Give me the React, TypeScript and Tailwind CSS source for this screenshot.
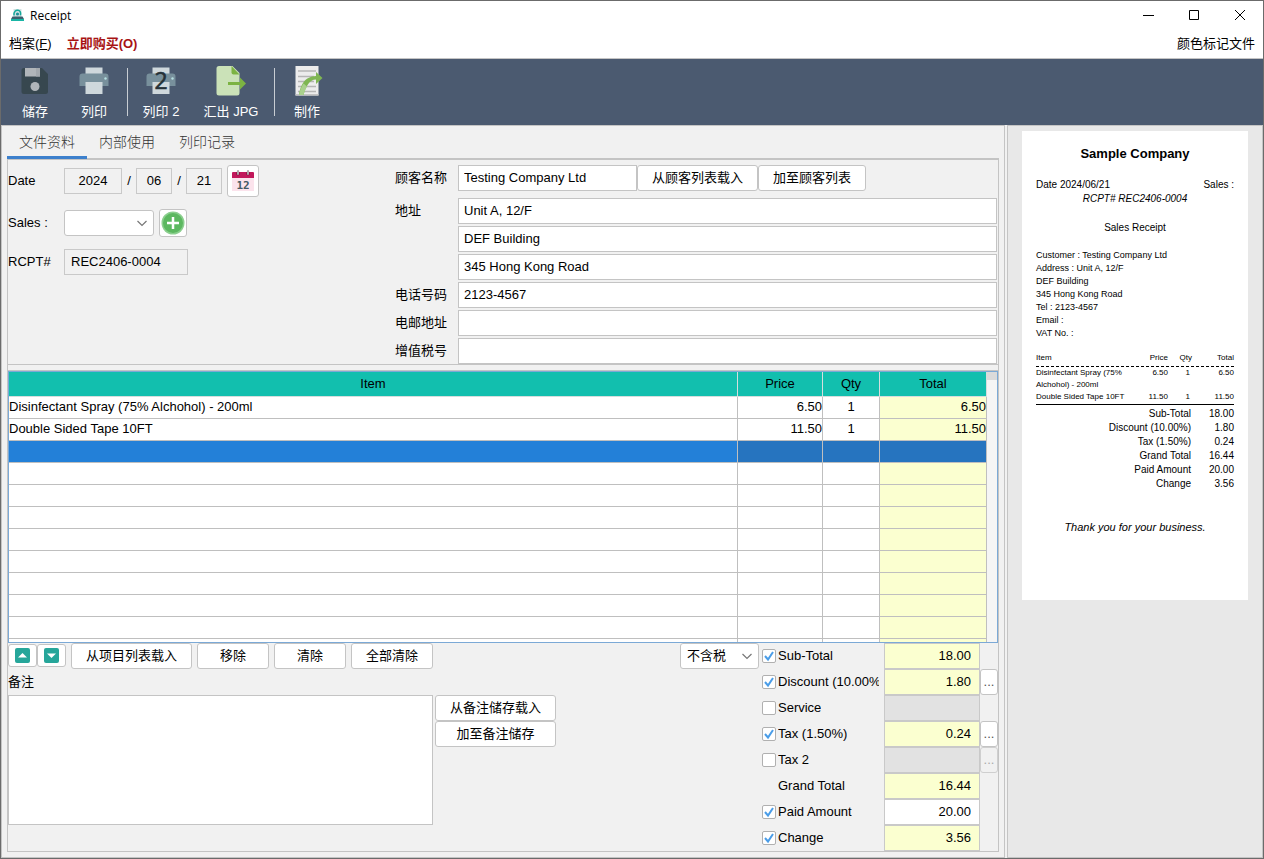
import React, { useState } from 'react';
import clsx from 'clsx';

interface LineItem {
  name: string;
  price: string;
  qty: string;
  total: string;
}

interface TotalRow {
  id: string;
  label: string;
  value: string;
  checked?: boolean;
  field: 'yellow' | 'gray' | 'white';
  more?: 'on' | 'off';
}

const items: LineItem[] = [
  { name: 'Disinfectant Spray (75% Alchohol) - 200ml', price: '6.50', qty: '1', total: '6.50' },
  { name: 'Double Sided Tape 10FT', price: '11.50', qty: '1', total: '11.50' },
];

const ROW_COUNT = 11;
const SELECTED_ROW = 2;

const totals: TotalRow[] = [
  { id: 'subtotal', label: 'Sub-Total', value: '18.00', checked: true, field: 'yellow' },
  { id: 'discount', label: 'Discount (10.00%)', value: '1.80', checked: true, field: 'yellow', more: 'on' },
  { id: 'service', label: 'Service', value: '', checked: false, field: 'gray' },
  { id: 'tax', label: 'Tax (1.50%)', value: '0.24', checked: true, field: 'yellow', more: 'on' },
  { id: 'tax2', label: 'Tax 2', value: '', checked: false, field: 'gray', more: 'off' },
  { id: 'grand', label: 'Grand Total', value: '16.44', field: 'yellow' },
  { id: 'paid', label: 'Paid Amount', value: '20.00', checked: true, field: 'white' },
  { id: 'change', label: 'Change', value: '3.56', checked: true, field: 'yellow' },
];

const customerLines = [
  'Customer : Testing Company Ltd',
  'Address : Unit A, 12/F',
  'DEF Building',
  '345 Hong Kong Road',
  'Tel : 2123-4567',
  'Email :',
  'VAT No. :',
];

/* ---------- icons ---------- */

const AppIcon = () => (
  <svg width="13" height="13" viewBox="0 0 13 13">
    <path d="M2.500 0h8v8h-8z" fill="#d5e4e4" />
    <path d="M3 6.500C2.500 2.500 5 1 7 1.300c2.300.3 3 2.200 2.500 5" fill="none" stroke="#14a89a" strokeWidth="1.500" />
    <circle cx="6.500" cy="5" r="1.600" fill="#1f8f9a" />
    <path d="M1.500 7.500h10L13 10H0z" fill="#3c5f6e" />
    <path d="M0 10h13v2H0z" fill="#19b5a5" />
  </svg>
);

const SaveIcon = () => (
  <svg width="32" height="32" viewBox="0 0 32 32">
    <path d="M5 3h18l6 6v17.500a2.500 2.500 0 0 1-2.500 2.500H5a2.500 2.500 0 0 1-2.500-2.500v-21A2.500 2.500 0 0 1 5 3z" fill="#37474f" />
    <path d="M6 3h15v8.500H6z" fill="#b0b5b9" />
    <path d="M17 3h4v8.500h-4z" fill="#a2a8ad" />
    <circle cx="16" cy="21.500" r="4.500" fill="#b0b5b9" />
  </svg>
);

const PrinterIcon = ({ two = false }: { two?: boolean }) => (
  <svg width="32" height="32" viewBox="0 0 32 32">
    <path d="M7.500 2.500h17v7h-17z" fill="#cfd8dc" />
    <path d="M4.500 8.500h23a3 3 0 0 1 3 3V21h-29v-9.500a3 3 0 0 1 3-3z" fill="#78909c" />
    <circle cx="27.500" cy="13.500" r="1.200" fill="#b7e0e2" />
    <path d="M7.500 17h17v12h-17z" fill="#cfd8dc" />
    {two && (
      <text x="16" y="24" textAnchor="middle" fontSize="23" stroke="#263238" strokeWidth="0.600" fill="#263238" className="font-['Open_Sans',sans-serif]">
        2
      </text>
    )}
  </svg>
);

const ExportIcon = () => (
  <svg width="32" height="32" viewBox="0 0 32 32">
    <path d="M4 1h13.500l7 7v20a2.500 2.500 0 0 1-2.500 2.500H4A2.500 2.500 0 0 1 1.500 28V3.500A2.500 2.500 0 0 1 4 1z" fill="#cbe2b8" />
    <path d="M16.500 1l8 8.500h-6a2 2 0 0 1-2-2z" fill="#7cb342" />
    <path d="M13 17h12v-4.500l6 6-6 6V20H13z" fill="#7cb342" />
  </svg>
);

const DesignIcon = () => (
  <svg width="32" height="32" viewBox="0 0 32 32">
    <path d="M4.500 1h23v29.500h-23z" fill="#ececec" />
    <path d="M4.500 29h23v1.500h-23z" fill="#c3c3c3" />
    <path d="M7 6h18M7 11.500h16M7 16.500h16M7 21.500h18M7 26.500h18" stroke="#b5b5b5" strokeWidth="1.500" />
    <path d="M8 30c1.500-9 5-18.500 17-19V7l6.500 6-6.500 6v-4.500C18.500 14.500 15 21 12.500 30z" fill="#7fb653" />
    <path d="M8 30c.9-4.500 2-8 4.500-11.500l3.500 3c-1.500 2.500-2.500 5-3.500 8.500z" fill="#a9d08d" />
  </svg>
);

const CalendarIcon = () => (
  <svg width="24" height="24" viewBox="0 0 24 24">
    <path d="M1 8h22v14H1z" fill="#fbe3ec" />
    <path d="M2 3h20a1 1 0 0 1 1 1v5H1V4a1 1 0 0 1 1-1z" fill="#c2185b" />
    <circle cx="7" cy="4.500" r="2" fill="#8c1445" />
    <circle cx="17" cy="4.500" r="2" fill="#8c1445" />
    <path d="M7 2v3M17 2v3" stroke="#b0a5aa" strokeWidth="2" strokeLinecap="round" />
    <text x="12" y="20" textAnchor="middle" fontSize="11" fontWeight="bold" fill="#455a64" className="font-['DejaVu_Sans_Mono',monospace]">
      12
    </text>
  </svg>
);

const PlusIcon = () => (
  <svg width="24" height="24" viewBox="0 0 24 24">
    <circle cx="12" cy="12" r="11.500" fill="#8bcf8e" />
    <circle cx="12" cy="12" r="10" fill="#5cb860" />
    <path d="M12 6v12M6 12h12" stroke="#fff" strokeWidth="2.500" />
  </svg>
);

const ArrowBoxIcon = ({ down = false }: { down?: boolean }) => (
  <svg width="15" height="15" viewBox="0 0 15 15">
    <rect width="15" height="15" rx="2" fill="#26a69a" />
    <path d={down ? 'M3 5.500h9l-4.500 4.500z' : 'M3 9.500h9L7.500 5z'} fill="#fff" />
  </svg>
);

/* ---------- small controls ---------- */

const buttonStyle = 'flex shrink-0 items-center justify-center rounded-[3px] border border-[#c4c4c4] bg-white';

function TextButton({ children, className }: { children: React.ReactNode; className?: string }) {
  return (
    <button type="button" className={clsx(buttonStyle, 'h-[26px]', className)}>
      {children}
    </button>
  );
}

function Select({ label, options, className }: { label: string; options: string[]; className: string }) {
  return (
    <div className={clsx('relative shrink-0', className)}>
      <select aria-label={label} className="h-[26px] w-full appearance-none rounded-[3px] border border-[#c4c4c4] bg-white pl-[6px]">
        {options.map((o) => (
          <option key={o}>{o}</option>
        ))}
      </select>
      <svg className="pointer-events-none absolute right-[7px] top-[10px]" width="10" height="7" viewBox="0 0 10 7">
        <path d="M.5 1L5 5.500 9.500 1" fill="none" stroke="#777" strokeWidth="1.200" />
      </svg>
    </div>
  );
}

function ToolButton({ label, icon, className }: { label: string; icon: React.ReactNode; className: string }) {
  return (
    <button type="button" className={clsx('flex shrink-0 flex-col items-center gap-[7px] pt-[6px] text-white', className)}>
      {icon}
      <span className="leading-4">{label}</span>
    </button>
  );
}

const fieldStyle = 'h-[26px] border border-[#c4c4c4] bg-white pb-[2px] pl-[5px]';
const dateStyle = 'h-[26px] border border-[#c9c9c9] bg-[#f1f1f1] pb-[2px] text-center';

/* ---------- sections ---------- */

function TitleBar() {
  return (
    <header className="bg-white">
      <div className="flex h-[29px] items-center justify-between pl-[10px] pr-[17px]">
        <h1 className="flex items-center gap-[6px] font-['Open_Sans',sans-serif] text-[12px]">
          <AppIcon />
          Receipt
        </h1>
        <div className="flex gap-[34px]">
          <button type="button" aria-label="Minimize">
            <svg width="12" height="12" viewBox="0 0 12 12"><path d="M1 5.500h11" stroke="#000" /></svg>
          </button>
          <button type="button" aria-label="Maximize">
            <svg width="12" height="12" viewBox="0 0 12 12"><path d="M1.500 .5h9v9h-9z" fill="none" stroke="#000" /></svg>
          </button>
          <button type="button" aria-label="Close">
            <svg width="12" height="12" viewBox="0 0 12 12"><path d="M1 0l10 10M11 0L1 10" stroke="#000" /></svg>
          </button>
        </div>
      </div>
      <nav className="flex h-[29px] items-center border-b border-[#c4c4c4] px-2">
        <button type="button">档案(<u>F</u>)</button>
        <button type="button" className="ml-[15px] font-bold text-[#a81414]">立即购买(O)</button>
        <button type="button" className="ml-auto">颜色标记文件</button>
      </nav>
    </header>
  );
}

function Toolbar() {
  return (
    <div className="flex h-[66px] bg-[#4b5a70] pl-[7px]">
      <ToolButton label="储存" icon={<SaveIcon />} className="w-[54px]" />
      <ToolButton label="列印" icon={<PrinterIcon />} className="w-[64px]" />
      <div className="ml-px mt-[9px] h-12 w-px bg-[#c8cdd3]" />
      <ToolButton label="列印 2" icon={<PrinterIcon two />} className="w-[66px]" />
      <ToolButton label="汇出 JPG" icon={<ExportIcon />} className="w-[74px]" />
      <div className="ml-[6px] mt-[9px] h-12 w-px bg-[#c8cdd3]" />
      <ToolButton label="制作" icon={<DesignIcon />} className="w-[64px]" />
    </div>
  );
}

function DocumentForm() {
  return (
    <section className="flex border-b border-[#c4c4c4] pt-[5px]">
      <div className="flex w-[387px] shrink-0 flex-col">
        <div className="flex h-8 items-center">
          <label htmlFor="year" className="w-14">Date</label>
          <input id="year" readOnly defaultValue="2024" className={clsx(dateStyle, 'w-[58px]')} />
          <span className="w-[14px] text-center">/</span>
          <input aria-label="Month" readOnly defaultValue="06" className={clsx(dateStyle, 'w-9')} />
          <span className="w-[14px] text-center">/</span>
          <input aria-label="Day" readOnly defaultValue="21" className={clsx(dateStyle, 'w-9')} />
          <button type="button" aria-label="Pick date" className={clsx(buttonStyle, 'ml-[5px] size-8')}>
            <CalendarIcon />
          </button>
        </div>
        <div className="mt-3 flex h-7 items-center">
          <span className="w-14">Sales :</span>
          <Select label="Sales" options={['']} className="w-[90px]" />
          <button type="button" aria-label="Add sales" className={clsx(buttonStyle, 'ml-[5px] size-7')}>
            <PlusIcon />
          </button>
        </div>
        <div className="mt-3 flex items-center">
          <label htmlFor="rcpt" className="w-14">RCPT#</label>
          <input id="rcpt" readOnly defaultValue="REC2406-0004" className="h-[26px] w-[124px] border border-[#c9c9c9] bg-[#f1f1f1] pb-[2px] pl-[6px]" />
        </div>
      </div>

      <div className="flex min-w-0 flex-1 flex-col gap-[2px] pr-px">
        <div className="mb-[5px] flex items-center">
          <label htmlFor="customer" className="w-[63px] shrink-0">顾客名称</label>
          <input id="customer" defaultValue="Testing Company Ltd" className={clsx(fieldStyle, 'w-[179px]')} />
          <TextButton className="w-[121px]">从顾客列表载入</TextButton>
          <TextButton className="w-[108px]">加至顾客列表</TextButton>
        </div>
        {[
          ['地址', 'Unit A, 12/F'],
          ['', 'DEF Building'],
          ['', '345 Hong Kong Road'],
          ['电话号码', '2123-4567'],
          ['电邮地址', ''],
          ['增值税号', ''],
        ].map(([label, value], i) => (
          <label key={i} className="flex items-center">
            <span className="w-[63px] shrink-0">{label}</span>
            <input aria-label={label || 'Address'} defaultValue={value} className={clsx(fieldStyle, 'min-w-0 flex-1')} />
          </label>
        ))}
      </div>
    </section>
  );
}

function ItemTable() {
  const line = 'border-b border-r border-[#bfbfbf]';
  return (
    <section className="mt-[5px] border-t border-[#c4c4c4]">
      <div className="flex border border-[#7ba9d6] bg-white">
        <table className="flex-1 table-fixed border-separate border-spacing-0">
          <colgroup>
            <col />
            <col className="w-[85px]" />
            <col className="w-[57px]" />
            <col className="w-[107px]" />
          </colgroup>
          <thead>
            <tr className="h-[25px] bg-[#12bfae]">
              {['Item', 'Price', 'Qty', 'Total'].map((h) => (
                <th key={h} className="border-b border-r border-[#d5dedd] p-0 font-normal">{h}</th>
              ))}
            </tr>
          </thead>
          <tbody>
            {Array.from({ length: ROW_COUNT }, (_, i) => {
              const item = items[i];
              const selected = i === SELECTED_ROW;
              const cell = clsx(line, 'p-0 pb-[2px] leading-[18px]', selected && 'bg-[#2674bf]');
              return (
                <tr key={i} className="h-[22px]">
                  <td className={clsx(line, 'p-0 pb-[2px] leading-[18px]', selected && 'bg-[#2380d8]')}>{item?.name}</td>
                  <td className={clsx(cell, 'text-right')}>{item?.price}</td>
                  <td className={clsx(cell, 'text-center')}>{item?.qty}</td>
                  <td className={clsx(cell, 'text-right', !selected && 'bg-[#fbffd0]')}>{item?.total}</td>
                </tr>
              );
            })}
            {/* sliver of the next row, cut off by the viewport */}
            <tr className="h-[3px]">
              <td className="border-r border-[#bfbfbf] p-0" />
              <td className="border-r border-[#bfbfbf] p-0" />
              <td className="border-r border-[#bfbfbf] p-0" />
              <td className="border-r border-[#bfbfbf] bg-[#fbffd0] p-0" />
            </tr>
          </tbody>
        </table>
        <div className="w-[10px] shrink-0 bg-[#f5f5f5]">
          <div className="h-2 bg-[#dadada]" />
        </div>
      </div>
    </section>
  );
}

function TotalLine({ row }: { row: TotalRow }) {
  const [checked, setChecked] = useState(!!row.checked);
  return (
    <div className="flex h-[26px] items-center">
      <div className="flex w-[117px] items-center gap-[2px] pb-px">
        {row.checked === undefined ? (
          <span className="w-[14px] shrink-0" />
        ) : (
          <span className="relative size-[14px] shrink-0">
            <input
              id={row.id}
              type="checkbox"
              checked={checked}
              onChange={(e) => setChecked(e.target.checked)}
              className="block size-[14px] appearance-none rounded-[2px] border border-[#b0b0b0] bg-white"
            />
            {checked && (
              <svg className="pointer-events-none absolute left-0 top-0" width="14" height="14" viewBox="0 0 14 14">
                <path d="M3 7l3 3.500L11 3" fill="none" stroke="#4a9de8" strokeWidth="2" />
              </svg>
            )}
          </span>
        )}
        <label htmlFor={row.checked === undefined ? `${row.id}-value` : row.id} className="min-w-0 overflow-hidden whitespace-nowrap">
          {row.label}
        </label>
      </div>
      <input
        id={`${row.id}-value`}
        aria-label={`${row.label} value`}
        readOnly={row.field !== 'white'}
        defaultValue={row.value}
        className={clsx(
          'ml-[5px] h-[26px] w-24 border border-[#c9c9c9] pb-[2px] pr-2 text-right',
          row.field === 'yellow' && 'bg-[#fbffd0]',
          row.field === 'gray' && 'bg-[#e2e2e2]',
          row.field === 'white' && 'bg-white'
        )}
      />
      {row.more ? (
        <button
          type="button"
          aria-label={`${row.label} options`}
          disabled={row.more === 'off'}
          className={clsx(
            'h-[26px] w-[18px] rounded-[3px] border text-center',
            row.more === 'on' ? 'border-[#c4c4c4] bg-white text-[#555]' : 'border-[#cfcfcf] bg-[#f1f1f1] text-[#aaa]'
          )}
        >
          ...
        </button>
      ) : (
        <span className="w-[18px]" />
      )}
    </div>
  );
}

function Footer() {
  return (
    <section className="flex justify-between">
      <div>
        <div className="flex items-start">
          <button type="button" aria-label="Move up" className={clsx(buttonStyle, 'mt-px h-[23px] w-[29px]')}>
            <ArrowBoxIcon />
          </button>
          <button type="button" aria-label="Move down" className={clsx(buttonStyle, 'mt-px h-[23px] w-[29px]')}>
            <ArrowBoxIcon down />
          </button>
          <div className="ml-[5px] flex gap-[5px]">
            <TextButton className="w-[121px]">从项目列表载入</TextButton>
            <TextButton className="w-[72px]">移除</TextButton>
            <TextButton className="w-[72px]">清除</TextButton>
            <TextButton className="w-[82px]">全部清除</TextButton>
          </div>
        </div>
        <label htmlFor="remarks" className="block h-[26px] leading-[26px]">备注</label>
        <div className="flex items-start gap-[2px]">
          <textarea id="remarks" className="h-[130px] w-[425px] resize-none border border-[#c4c4c4] bg-white" />
          <div>
            <TextButton className="w-[121px]">从备注储存载入</TextButton>
            <TextButton className="w-[121px]">加至备注储存</TextButton>
          </div>
        </div>
      </div>
      <div className="flex gap-[3px]">
        <Select label="Tax mode" options={['不含税', '含税']} className="w-[79px]" />
        <div>
          {totals.map((row) => (
            <TotalLine key={row.id} row={row} />
          ))}
        </div>
      </div>
    </section>
  );
}

function Preview() {
  return (
    <aside className="w-64 shrink-0 border border-[#c4c4c4] bg-[#e8e8e8] px-[14px] pt-[5px]">
      <article className="h-[469px] bg-white px-[14px] pt-[13px] text-[10px] leading-[14px]">
        <h2 className="text-center text-[13px] font-bold leading-5">Sample Company</h2>
        <div className="mt-[14px] flex justify-between">
          <span>Date 2024/06/21</span>
          <span>Sales :</span>
        </div>
        <p className="text-center italic">RCPT# REC2406-0004</p>
        <p className="mt-[15px] text-center">Sales Receipt</p>
        <div className="mt-[14px] text-[9px] leading-[13px]">
          {customerLines.map((l) => (
            <p key={l}>{l}</p>
          ))}
        </div>
        <table className="mt-3 w-full table-fixed border-separate border-spacing-0 text-right text-[8px] leading-3">
          <colgroup>
            <col />
            <col className="w-9" />
            <col className="w-6" />
            <col className="w-[42px]" />
          </colgroup>
          <thead>
            <tr>
              <th className="p-0 text-left font-normal">Item</th>
              <th className="p-0 font-normal">Price</th>
              <th className="p-0 font-normal">Qty</th>
              <th className="p-0 font-normal">Total</th>
            </tr>
          </thead>
          <tbody>
            <tr>
              <td colSpan={4} className="h-[3px] border-b border-dashed border-black p-0" />
            </tr>
            {items.map((item) => (
              <tr key={item.name} className="align-top">
                <td className="p-0 text-left">{item.name}</td>
                <td className="p-0">{item.price}</td>
                <td className="p-0 pr-[2px]">{item.qty}</td>
                <td className="p-0">{item.total}</td>
              </tr>
            ))}
          </tbody>
        </table>
        <dl className="mt-px grid grid-cols-[1fr_43px] border-t border-black pt-[2px] text-right">
          {totals.filter((t) => t.value).map((t) => (
            <React.Fragment key={t.id}>
              <dt>{t.label}</dt>
              <dd>{t.value}</dd>
            </React.Fragment>
          ))}
        </dl>
        <p className="mt-[29px] text-center text-[11px] italic">Thank you for your business.</p>
      </article>
    </aside>
  );
}

export default function App() {
  const [tab, setTab] = useState(0);

  return (
    <div className="flex min-h-screen flex-col border border-[#6b6b6b] bg-[#f1f1f1] font-['Liberation_Sans','Noto_Sans_CJK_SC',sans-serif] text-[13px] leading-5 text-black">
      <TitleBar />
      <Toolbar />
      <div className="flex flex-1 gap-[2px]">
        <main className="flex min-w-0 flex-1 flex-col border border-[#c4c4c4] px-[5px] pb-[5px]">
          <div role="tablist" className="flex h-[34px] border-b-2 border-[#c4c4c4]">
            {['文件资料', '内部使用', '列印记录'].map((name, i) => (
              <button
                key={name}
                type="button"
                role="tab"
                aria-selected={tab === i}
                onClick={() => setTab(i)}
                className={clsx(
                  'h-[33px] border-b-[3px] px-3 pt-[2px] text-[14px] font-light text-[#333]',
                  tab === i ? 'border-[#3d80cc]' : 'border-transparent'
                )}
              >
                {name}
              </button>
            ))}
          </div>
          <div className="flex-1 border border-t-0 border-[#c4c4c4]">
            <DocumentForm />
            <ItemTable />
            <Footer />
          </div>
        </main>
        <Preview />
      </div>
    </div>
  );
}
